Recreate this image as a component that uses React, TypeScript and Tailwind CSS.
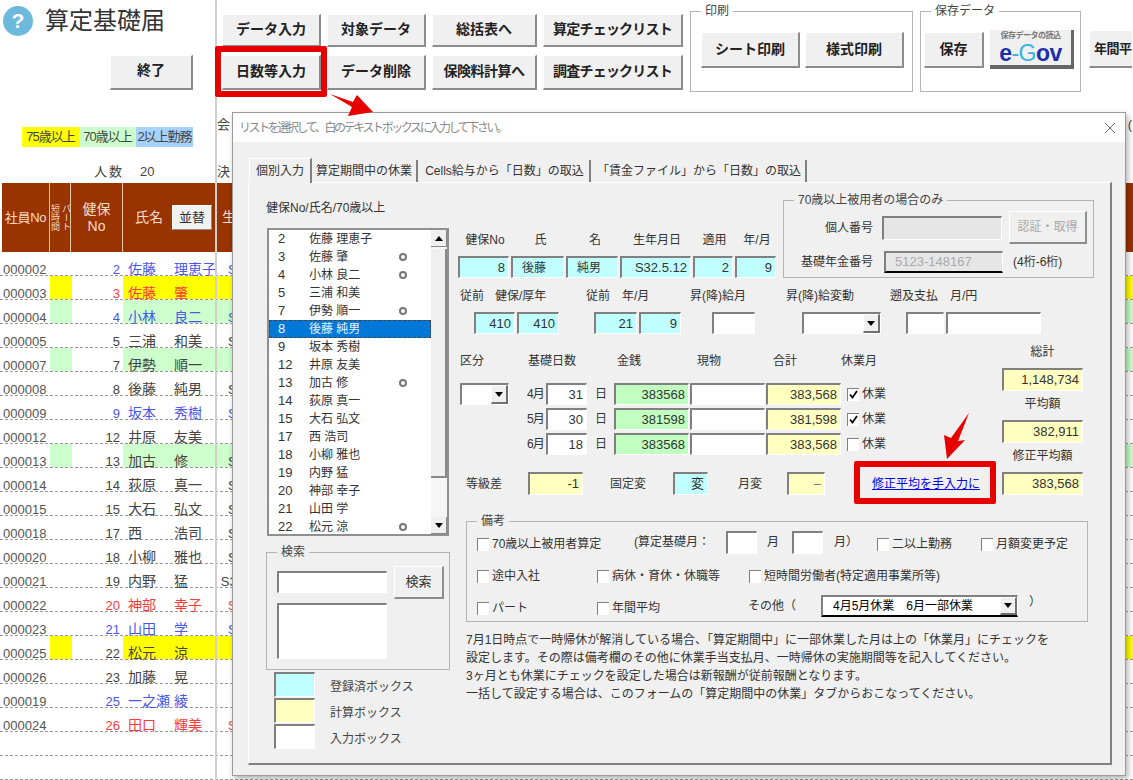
import type { ReactNode } from "react";

type Ink = "dark" | "blue" | "red";
type Band = "none" | "yellow" | "green";

const members: { id: string; no: number; fam: string; giv: string; ink: Ink; band: Band; date: string }[] = [
  { id: "000002", no: 2, fam: "佐藤", giv: "理恵子", ink: "blue", band: "none", date: "S32.5.12" },
  { id: "000003", no: 3, fam: "佐藤", giv: "肇", ink: "red", band: "yellow", date: "" },
  { id: "000004", no: 4, fam: "小林", giv: "良二", ink: "blue", band: "green", date: "S32.5.12" },
  { id: "000005", no: 5, fam: "三浦", giv: "和美", ink: "dark", band: "none", date: "S32.5.12" },
  { id: "000007", no: 7, fam: "伊勢", giv: "順一", ink: "dark", band: "green", date: "" },
  { id: "000008", no: 8, fam: "後藤", giv: "純男", ink: "dark", band: "none", date: "S32.5.12" },
  { id: "000009", no: 9, fam: "坂本", giv: "秀樹", ink: "blue", band: "none", date: "S32.5.12" },
  { id: "000012", no: 12, fam: "井原", giv: "友美", ink: "dark", band: "none", date: "" },
  { id: "000013", no: 13, fam: "加古", giv: "修", ink: "dark", band: "green", date: "S32.5.12" },
  { id: "000014", no: 14, fam: "荻原", giv: "真一", ink: "dark", band: "none", date: "S32.5.12" },
  { id: "000015", no: 15, fam: "大石", giv: "弘文", ink: "dark", band: "none", date: "S32.5.12" },
  { id: "000018", no: 17, fam: "西", giv: "浩司", ink: "dark", band: "none", date: "S32.5.12" },
  { id: "000020", no: 18, fam: "小柳", giv: "雅也", ink: "dark", band: "none", date: "S32.5.12" },
  { id: "000021", no: 19, fam: "内野", giv: "猛", ink: "dark", band: "none", date: "S32.10.15" },
  { id: "000022", no: 20, fam: "神部", giv: "幸子", ink: "red", band: "none", date: "S32.5.12" },
  { id: "000023", no: 21, fam: "山田", giv: "学", ink: "blue", band: "none", date: "S32.5.12" },
  { id: "000025", no: 22, fam: "松元", giv: "涼", ink: "dark", band: "yellow", date: "" },
  { id: "000026", no: 23, fam: "加藤", giv: "晃", ink: "dark", band: "none", date: "" },
  { id: "000019", no: 25, fam: "一之瀬", giv: "綾", ink: "blue", band: "none", date: "" },
  { id: "000024", no: 26, fam: "田口", giv: "輝美", ink: "red", band: "none", date: "S32.5.12" },
];

const inkClass: Record<Ink, string> = { dark: "text-[#444444]", blue: "text-[#4a58ea]", red: "text-[#f83c3c]" };
const bandClass: Record<Band, string> = { none: "", yellow: "bg-[#ffff00]", green: "bg-[#ccffcc]" };

const toneClass = {
  white: "bg-white",
  cyan: "bg-[#bfffff]",
  yellow: "bg-[#ffffc0]",
  green: "bg-[#c0ffc0]",
  gray: "bg-[#e6e6e6]",
};

function Btn({ className, children }: { className: string; children: ReactNode }) {
  return (
    <div
      className={`flex items-center justify-center shrink-0 whitespace-nowrap bg-[#f0f0f0] border-t border-l border-t-white border-l-white border-r-2 border-b-2 border-r-[#8c8c8c] border-b-[#8c8c8c] ${className}`}
    >
      {children}
    </div>
  );
}

function Field({
  className,
  tone = "white",
  children,
}: {
  className: string;
  tone?: keyof typeof toneClass;
  children?: ReactNode;
}) {
  return (
    <div
      className={`flex items-center justify-end shrink-0 pr-[3px] text-[13px] text-[#333] border-t-2 border-l-2 border-t-[#808080] border-l-[#808080] border-r border-b border-r-white border-b-white ${toneClass[tone]} ${className}`}
    >
      {children}
    </div>
  );
}

function Arrow() {
  return (
    <div className="flex items-center justify-center w-[17px] h-full shrink-0 bg-[#f0f0f0] border-t border-l border-white border-r-2 border-b-2 border-r-[#707070] border-b-[#707070]">
      <svg width="8" height="5" viewBox="0 0 8 5">
        <path d="M0 0h8L4 5z" fill="#000" />
      </svg>
    </div>
  );
}

function Combo({ className, children }: { className: string; children?: ReactNode }) {
  return (
    <div className={`flex shrink-0 bg-white border-t-2 border-l-2 border-t-[#808080] border-l-[#808080] border-r border-b border-r-white border-b-white ${className}`}>
      <div className="flex-1 flex items-center pl-[10px] whitespace-nowrap">{children}</div>
      <Arrow />
    </div>
  );
}

function Check({ label, checked, className = "" }: { label: string; checked?: boolean; className?: string }) {
  return (
    <div className={`flex items-center shrink-0 whitespace-nowrap ${className}`}>
      <div className="flex items-center justify-center w-[12px] h-[13px] shrink-0 bg-white border-t border-l border-t-[#808080] border-l-[#808080]">
        {checked && (
          <svg width="9" height="9" viewBox="0 0 9 9">
            <path d="M1 4.5l2.5 3L8 1" fill="none" stroke="#000" strokeWidth="1.8" />
          </svg>
        )}
      </div>
      <span className="ml-[3px]">{label}</span>
    </div>
  );
}

function Group({
  title,
  className,
  titleClass,
  children,
}: {
  title: string;
  className: string;
  titleClass: string;
  children?: ReactNode;
}) {
  return (
    <div className={`relative shrink-0 border border-[#b4b4b4] ${className}`}>
      <span className={`absolute -top-[9px] left-[10px] px-[4px] leading-[16px] text-[12px] text-[#444] whitespace-nowrap ${titleClass}`}>
        {title}
      </span>
      {children}
    </div>
  );
}

function Toolbar() {
  return (
    <div className="flex items-start pl-[7px]">
      <div className="mt-[14px] grid grid-cols-[99px_99px_105px_140px] grid-rows-[33px_35px] gap-y-[8px] gap-x-[6px] text-[14px] font-bold text-[#222]">
        <Btn className="w-full h-full pb-[2px]">データ入力</Btn>
        <Btn className="w-full h-full pb-[2px]">対象データ</Btn>
        <Btn className="w-full h-full pb-[2px]">総括表へ</Btn>
        <Btn className="w-full h-full pb-[2px] tracking-[-0.8px]">算定チェックリスト</Btn>
        <Btn className="w-full h-full pb-[2px]">日数等入力</Btn>
        <Btn className="w-full h-full pb-[2px]">データ削除</Btn>
        <Btn className="w-full h-full pb-[2px] tracking-[-0.5px]">保険料計算へ</Btn>
        <Btn className="w-full h-full pb-[2px] tracking-[-0.8px]">調査チェックリスト</Btn>
      </div>
      <Group title="印刷" titleClass="bg-white" className="ml-[7px] mt-[11px] w-[223px] h-[81px] bg-white">
        <div className="flex gap-[5px] pl-[10px] pt-[20px] text-[14px] font-bold text-[#222]">
          <Btn className="w-[99px] h-[36px]">シート印刷</Btn>
          <Btn className="w-[99px] h-[36px]">様式印刷</Btn>
        </div>
      </Group>
      <Group title="保存データ" titleClass="bg-white" className="ml-[7px] mt-[11px] w-[161px] h-[81px] bg-white">
        <div className="flex gap-[6px] pl-[3px] pt-[20px] text-[14px] font-bold text-[#222]">
          <Btn className="w-[60px] h-[36px]">保存</Btn>
          <div className="flex flex-col items-center w-[84px] h-[39px] -mt-[2px] bg-[#f0f0f0] border-r-[3px] border-b-[4px] border-r-[#666] border-b-[#666]">
            <span className="text-[8px] leading-[12px] font-bold text-[#777] tracking-[-0.5px]">保存データの読込</span>
            <span className="text-[23px] leading-[22px] font-black tracking-[-0.5px] text-[#1c2fa8]">
              e<span className="text-[#35b4e6] font-normal">-G</span>ov
            </span>
          </div>
        </div>
      </Group>
      <Btn className="ml-[8px] mt-[30px] w-[43px] h-[38px] !justify-start pl-[4px] text-[13px] tracking-[-0.5px] font-bold text-[#222] !border-r-0">年間平</Btn>
    </div>
  );
}

function SheetTop() {
  return (
    <div className="flex h-[183px]">
      <div className="w-[215px] shrink-0 flex flex-col">
        <div className="flex items-center gap-[12px] pl-[3px] pt-[6px]">
          <div className="flex items-center justify-center w-[30px] h-[30px] rounded-full bg-[#6db9dc] text-white text-[21px] font-bold">?</div>
          <div className="text-[24px] leading-[30px] text-[#333]">算定基礎届</div>
        </div>
        <Btn className="ml-[110px] mt-[19px] pb-[3px] w-[83px] h-[35px] text-[14px] font-bold text-[#222]">終了</Btn>
        <div className="flex ml-[22px] mt-[37px] h-[20px] text-[13px] leading-[20px] tracking-[-1px] text-[#444]">
          <div className="w-[57px] bg-[#ffff00] text-center">75歳以上</div>
          <div className="w-[57px] bg-[#ccffcc] text-center">70歳以上</div>
          <div className="w-[57px] bg-[#a6d2ff] text-center">2以上勤務</div>
        </div>
        <div className="flex ml-[94px] mt-[17px] text-[13px] leading-[16px] text-[#444]">
          <span className="tracking-[2px]">人数</span>
          <span className="ml-[16px]">20</span>
        </div>
      </div>
      <div className="flex-1 min-w-0 overflow-hidden flex flex-col">
        <Toolbar />
        <div className="flex justify-between pl-[2px] pr-[1px] mt-[25px] text-[13px] leading-[16px] text-[#444]">
          <span>会</span>
          <span>(</span>
        </div>
        <div className="pl-[2px] mt-[31px] text-[13px] leading-[16px] text-[#444]">決</div>
      </div>
    </div>
  );
}

function SheetTable() {
  return (
    <div>
      <div className="flex h-[69px] ml-[2px] bg-[#993300] text-[#f3dcc8] text-[14px]">
        <div className="flex items-center justify-center w-[48px] border-r border-[#e8c8a8] text-[13px] tracking-[-0.3px]">社員No</div>
        <div className="flex items-center justify-center gap-[2px] w-[21px] border-r border-[#e8c8a8] text-[9px] leading-[9px]">
          <span className="[writing-mode:vertical-rl]">短時間</span>
          <span className="[writing-mode:vertical-rl]">パート</span>
        </div>
        <div className="flex flex-col items-center justify-center w-[52px] border-r border-[#e8c8a8] leading-[17px]">
          <span>健保</span>
          <span>No</span>
        </div>
        <div className="flex items-center w-[92px] pl-[12px]">
          <span>氏名</span>
          <Btn className="ml-[9px] w-[40px] h-[25px] text-[13px] text-[#333] !border-r !border-b">並替</Btn>
        </div>
        <div className="flex-1 flex items-center pl-[7px]">生</div>
      </div>
      {members.map((m) => (
        <SheetRow key={m.id} row={m} />
      ))}
      <div className="h-[24px] border-b border-dashed border-[#999]" />
      <div className="h-[24px] border-b border-dashed border-[#999]" />
    </div>
  );
}

function SheetRow({ row }: { row: (typeof members)[number] }) {
  return (
    <div className={`flex h-[24px] items-stretch border-b border-dashed border-[#999] text-[14px] leading-[11px] ${inkClass[row.ink]}`}>
      <div className="flex items-end w-[50px] pl-[3px] text-[13px] text-[#555]">{row.id}</div>
      <div className={`w-[22px] ${bandClass[row.band]}`} />
      <div className="flex items-end justify-end w-[51px] pr-[3px] text-[13px]">{row.no}</div>
      <div className={`flex-1 flex items-end ${bandClass[row.band]}`}>
        <span className="w-[51px] pl-[5px] whitespace-nowrap">{row.fam}</span>
        <span className="w-[41px] whitespace-nowrap">{row.giv}</span>
        <span className="w-[65px] text-right text-[13px]">{row.date}</span>
      </div>
    </div>
  );
}

function MemberList() {
  return (
    <div className="flex ml-[1px] mt-[12px] w-[182px] h-[308px] bg-white border-t-2 border-l-2 border-r-2 border-b-2 border-[#909090]">
      <div className="flex-1 min-w-0">
        {members.slice(0, 17).map((m) => {
          const picked = m.no === 8;
          return (
            <div
              key={m.id}
              className={`flex items-center h-[18px] text-[12px] ${picked ? "bg-[#0078d7] text-[#e8f2fb] outline-1 -outline-offset-1 outline-dashed outline-[#444]" : "text-[#333]"}`}
            >
              <span className="w-[40px] pl-[9px] text-[13px]">{m.no}</span>
              <span className="w-[90px] whitespace-nowrap">
                {m.fam} {m.giv}
              </span>
              {m.band !== "none" && <span className="w-[8px] h-[8px] rounded-full border-2 border-[#777]" />}
            </div>
          );
        })}
      </div>
      <div className="flex flex-col w-[16px] shrink-0 bg-[#f6f6f6]">
        <div className="flex items-center justify-center h-[17px] bg-[#f0f0f0] border-b border-r border-[#888]">
          <svg width="8" height="5" viewBox="0 0 8 5">
            <path d="M0 5h8L4 0z" fill="#000" />
          </svg>
        </div>
        <div className="h-[229px] mt-[2px] bg-[#f0f0f0] border-r-2 border-b-2 border-[#888]" />
        <div className="flex-1" />
        <div className="flex items-center justify-center h-[17px] bg-[#f0f0f0] border-b border-r border-[#888]">
          <svg width="8" height="5" viewBox="0 0 8 5">
            <path d="M0 0h8L4 5z" fill="#000" />
          </svg>
        </div>
      </div>
    </div>
  );
}

function LeftColumn() {
  return (
    <div className="w-[184px] shrink-0">
      <div className="h-[16px] leading-[16px] whitespace-nowrap">健保No/氏名/70歳以上</div>
      <MemberList />
      <Group title="検索" titleClass="bg-[#f0f0f0]" className="mt-[16px] w-[184px] h-[118px]">
        <div className="flex pl-[10px] pt-[18px]">
          <div className="w-[110px]">
            <Field className="w-[110px] h-[22px]" />
            <Field className="w-[110px] h-[56px] mt-[10px]" />
          </div>
          <Btn className="ml-[7px] -mt-[5px] w-[50px] h-[33px] text-[13px] text-[#333]">検索</Btn>
        </div>
      </Group>
      <div className="flex flex-col gap-[1px] ml-[8px] mt-[2px]">
        {(
          [
            ["cyan", "登録済ボックス"],
            ["yellow", "計算ボックス"],
            ["white", "入力ボックス"],
          ] as const
        ).map(([tone, label]) => (
          <div key={label} className="flex items-center">
            <Field tone={tone} className="w-[41px] h-[25px]" />
            <span className="ml-[15px] pt-[4px] text-[#444]">{label}</span>
          </div>
        ))}
      </div>
    </div>
  );
}

function TopFields() {
  return (
    <div className="flex h-[78px]">
      <div className="w-[325px] shrink-0 flex flex-col justify-end">
        <div className="flex gap-[2px] h-[16px] leading-[16px] text-center mb-[8px]">
          <span className="w-[54px]">健保No</span>
          <span className="w-[53px]">氏</span>
          <span className="w-[52px]">名</span>
          <span className="w-[68px]">生年月日</span>
          <span className="w-[43px]">適用</span>
          <span className="w-[38px]">年/月</span>
        </div>
        <div className="flex gap-[2px] h-[22px]">
          <Field tone="cyan" className="w-[51px] h-full">8</Field>
          <Field tone="cyan" className="w-[53px] h-full !justify-start !pl-[9px] !text-[12px]">後藤</Field>
          <Field tone="cyan" className="w-[52px] h-full !justify-start !pl-[9px] !text-[12px]">純男</Field>
          <Field tone="cyan" className="w-[71px] h-full">S32.5.12</Field>
          <Field tone="cyan" className="w-[40px] h-full">2</Field>
          <Field tone="cyan" className="w-[41px] h-full">9</Field>
        </div>
      </div>
      <Group title="70歳以上被用者の場合のみ" titleClass="bg-[#f0f0f0]" className="w-[311px] h-[78px]">
        <div className="flex items-center mt-[10px] h-[33px]">
          <span className="w-[89px] text-right">個人番号</span>
          <Field tone="gray" className="ml-[9px] w-[120px] h-[24px]" />
          <Btn className="ml-[7px] w-[78px] h-[33px] text-[#a8a8a8] !border-r-[#909090]">認証・取得</Btn>
        </div>
        <div className="flex items-center mt-[7px] h-[22px]">
          <span className="w-[89px] text-right">基礎年金番号</span>
          <Field tone="gray" className="ml-[11px] w-[119px] h-[22px] !justify-start !pl-[9px] !text-[#aaa] !border-b-2 !border-b-black">5123-148167</Field>
          <span className="ml-[10px]">(4桁-6桁)</span>
        </div>
      </Group>
    </div>
  );
}

function RaiseFields() {
  return (
    <>
      <div className="flex mt-[10px] h-[16px] leading-[16px] whitespace-nowrap">
        <span className="w-[37px] pl-[2px]">従前</span>
        <span className="w-[91px]">健保/厚年</span>
        <span className="w-[36px]">従前</span>
        <span className="w-[68px]">年/月</span>
        <span className="w-[96px]">昇(降)給月</span>
        <span className="w-[104px]">昇(降)給変動</span>
        <span className="w-[60px]">遡及支払</span>
        <span>月/円</span>
      </div>
      <div className="flex mt-[8px] h-[22px]">
        <Field tone="cyan" className="ml-[16px] w-[41px] h-full">410</Field>
        <Field tone="cyan" className="ml-[2px] w-[42px] h-full">410</Field>
        <Field tone="cyan" className="ml-[35px] w-[43px] h-full">21</Field>
        <Field tone="cyan" className="ml-[2px] w-[42px] h-full">9</Field>
        <Field className="ml-[31px] w-[43px] h-full" />
        <Combo className="ml-[47px] w-[79px] h-full" />
        <Field className="ml-[25px] w-[38px] h-full" />
        <Field className="ml-[2px] w-[95px] h-full" />
      </div>
    </>
  );
}

const months = [
  { m: "4月", days: 31, cash: "383568", sum: "383,568", off: true },
  { m: "5月", days: 30, cash: "381598", sum: "381,598", off: true },
  { m: "6月", days: 18, cash: "383568", sum: "383,568", off: false },
];

function WageFields() {
  return (
    <div className="flex mt-[11px]">
      <div className="w-[544px] shrink-0">
        <div className="flex mt-[8px] h-[16px] leading-[16px]">
          <span className="w-[70px] pl-[2px]">区分</span>
          <span className="w-[89px]">基礎日数</span>
          <span className="w-[80px]">金銭</span>
          <span className="w-[76px]">現物</span>
          <span className="w-[68px]">合計</span>
          <span>休業月</span>
        </div>
        <div className="flex mt-[14px]">
          <Combo className="ml-[2px] w-[49px] h-[22px]" />
          <div className="flex flex-col gap-[3px] ml-[18px]">
            {months.map((r) => (
              <div key={r.m} className="flex items-center h-[22px]">
                <span className="w-[19px] tracking-[-1px]">{r.m}</span>
                <Field className="w-[41px] h-full">{r.days}</Field>
                <span className="w-[27px] pl-[8px]">日</span>
                <Field tone="green" className="w-[75px] h-full">{r.cash}</Field>
                <Field className="ml-[1px] w-[75px] h-full" />
                <Field tone="yellow" className="ml-[1px] w-[75px] h-full">{r.sum}</Field>
                <Check label="休業" checked={r.off} className="ml-[6px]" />
              </div>
            ))}
          </div>
        </div>
        <div className="flex items-center mt-[17px] h-[23px]">
          <span className="ml-[8px] w-[62px]">等級差</span>
          <Field tone="yellow" className="w-[55px] h-full">-1</Field>
          <span className="ml-[27px] w-[63px]">固定変</span>
          <Field tone="cyan" className="w-[35px] h-full">変</Field>
          <span className="ml-[30px] w-[49px]">月変</span>
          <Field tone="yellow" className="w-[38px] h-full !text-[#777]">–</Field>
          <a href="#" className="ml-[47px] text-[#0000ee] underline whitespace-nowrap">修正平均を手入力に</a>
        </div>
      </div>
      <div className="flex flex-col items-center w-[81px] -mt-[1px] text-center">
        <span className="h-[16px] leading-[16px] mb-[8px]">総計</span>
        <Field tone="yellow" className="w-[81px] h-[23px]">1,148,734</Field>
        <span className="h-[16px] leading-[16px] mt-[5px] mb-[8px]">平均額</span>
        <Field tone="yellow" className="w-[81px] h-[23px]">382,911</Field>
        <span className="h-[16px] leading-[16px] mt-[5px] mb-[8px]">修正平均額</span>
        <Field tone="yellow" className="w-[81px] h-[23px]">383,568</Field>
      </div>
    </div>
  );
}

function RemarksGroup() {
  return (
    <Group title="備考" titleClass="bg-[#f0f0f0]" className="ml-[8px] mt-[26px] w-[622px] h-[101px]">
      <div className="flex flex-col gap-[10px] pl-[10px] pt-[11px]">
        <div className="flex items-center h-[22px]">
          <Check label="70歳以上被用者算定" className="w-[157px]" />
          <span className="w-[92px] -mt-[4px] whitespace-nowrap">(算定基礎月：</span>
          <Field className="w-[31px] h-[23px] -mt-[3px]" />
          <span className="ml-[10px] w-[25px] -mt-[4px]">月</span>
          <Field className="w-[31px] h-[23px] -mt-[3px]" />
          <span className="ml-[11px] w-[43px] -mt-[4px]">月）</span>
          <Check label="二以上勤務" className="w-[104px]" />
          <Check label="月額変更予定" />
        </div>
        <div className="flex items-center h-[22px]">
          <Check label="途中入社" className="w-[120px]" />
          <Check label="病休・育休・休職等" className="w-[152px]" />
          <Check label="短時間労働者(特定適用事業所等)" />
        </div>
        <div className="flex items-center h-[22px]">
          <Check label="パート" className="w-[120px]" />
          <Check label="年間平均" className="w-[151px]" />
          <div className="flex items-center w-[73px] -mt-[5px]">その他（</div>
          <Combo className="w-[197px] h-[22px] -mt-[5px] border-b-2 !border-b-black text-black">
            4月5月休業　6月一部休業
          </Combo>
          <span className="ml-[11px] -mt-[12px]">）</span>
        </div>
      </div>
    </Group>
  );
}

function Dialog() {
  return (
    <div className="absolute left-[232px] top-[112px] w-[894px] h-[664px] flex flex-col border border-[#9a9a9a] shadow-[2px_3px_6px_rgba(0,0,0,0.3)] bg-[#f0f0f0]">
      <div className="flex items-center justify-between shrink-0 h-[29px] bg-white pl-[6px] pr-[9px]">
        <span className="text-[12px] tracking-[-2.4px] text-[#8a8a8a]">リストを選択して、白のテキストボックスに入力して下さい。</span>
        <svg width="12" height="12" viewBox="0 0 12 12">
          <path d="M1 1l10 10M11 1L1 11" stroke="#666" strokeWidth="1" fill="none" />
        </svg>
      </div>
      <div className="pl-[15px] pt-[16px] text-[12px] text-[#333]">
        <div className="flex items-end h-[24px] whitespace-nowrap">
          <div className="relative z-10 flex items-center justify-center ml-[1px] w-[63px] h-[25px] -mb-[1px] bg-[#f0f0f0] border-t border-l border-white border-r-2 border-r-[#808080]">個別入力</div>
          <div className="flex items-center justify-center w-[106px] h-[22px] border-r-2 border-[#808080]">算定期間中の休業</div>
          <div className="flex items-center justify-center ml-[2px] w-[171px] h-[22px] border-r-2 border-[#808080]">Cells給与から「日数」の取込</div>
          <div className="flex items-center justify-center ml-[2px] w-[214px] h-[22px] border-r-2 border-[#808080]">「賃金ファイル」から「日数」の取込</div>
        </div>
        <div className="flex w-[864px] h-[583px] pl-[17px] pt-[17px] border-t border-l border-white border-r-2 border-b-2 border-r-[#808080] border-b-[#808080]">
          <LeftColumn />
          <div className="ml-[8px] w-[636px] shrink-0">
            <TopFields />
            <RaiseFields />
            <WageFields />
            <RemarksGroup />
            <div className="ml-[8px] mt-[9px] leading-[18px] whitespace-nowrap text-[#333]">
              <p>7月1日時点で一時帰休が解消している場合、「算定期間中」に一部休業した月は上の「休業月」にチェックを</p>
              <p>設定します。その際は備考欄のその他に休業手当支払月、一時帰休の実施期間等を記入してください。</p>
              <p>3ヶ月とも休業にチェックを設定した場合は新報酬が従前報酬となります。</p>
              <p>一括して設定する場合は、このフォームの「算定期間中の休業」タブからおこなってください。</p>
            </div>
          </div>
        </div>
      </div>
    </div>
  );
}

export default function App() {
  return (
    <div className="relative w-[1133px] h-[780px] overflow-hidden bg-white font-['Liberation_Sans','Noto_Sans_CJK_JP',sans-serif]">
      <SheetTop />
      <SheetTable />
      {/* freeze pane line */}
      <div className="absolute left-[215px] top-0 bottom-0 w-[2px] bg-[#cfcfcf]" />
      <Dialog />
      {/* red callouts */}
      <div className="absolute left-[215px] top-[46px] w-[112px] h-[51px] border-[6px] border-[#e60000] rounded-[2px]" />
      <div className="absolute left-[854px] top-[461px] w-[142px] h-[43px] border-[6px] border-[#e60000] rounded-[2px]" />
      <svg className="absolute left-0 top-0 pointer-events-none" width="1133" height="780" viewBox="0 0 1133 780">
        <path d="M330 94L353 102L357 95L373 112L348 116L352 107Z" fill="#e60000" />
        <path d="M969 413L958 441L965 440L947 459L944 435L951 438Z" fill="#e60000" />
      </svg>
    </div>
  );
}
